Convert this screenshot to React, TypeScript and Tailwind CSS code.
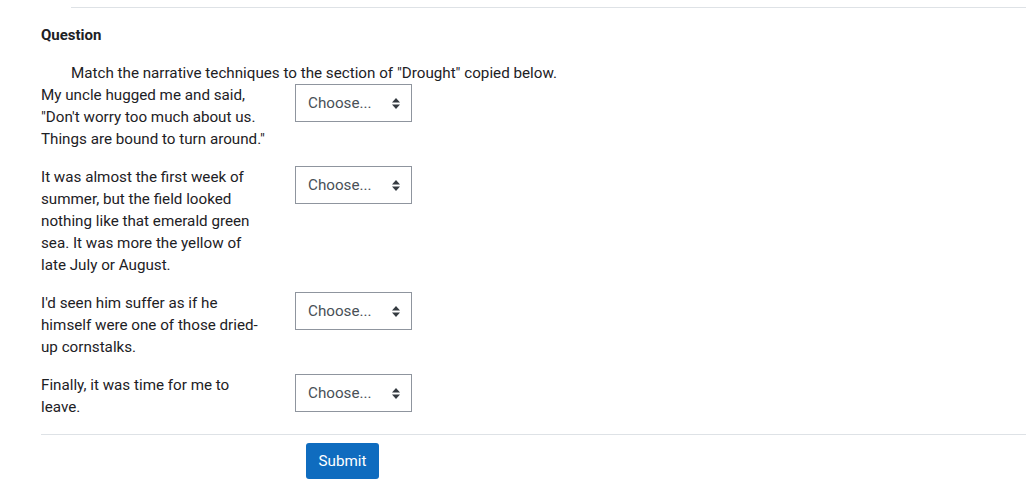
const items = [
  'My uncle hugged me and said, "Don\'t worry too much about us. Things are bound to turn around."',
  'It was almost the first week of summer, but the field looked nothing like that emerald green sea. It was more the yellow of late July or August.',
  "I'd seen him suffer as if he himself were one of those dried-up cornstalks.",
  'Finally, it was time for me to leave.',
]

function ChooseSelect() {
  return (
    <div className="relative h-[38px] w-[117px] border border-[#8f959e] bg-white">
      <span className="absolute left-[12px] top-[7px] leading-[22px] text-[#495057]">Choose...</span>
      <svg className="absolute right-[11px] top-[13px]" width="8" height="11" viewBox="0 0 8 11">
        <path d="M4 0 L8 4.5 H0 Z" fill="#343a40" />
        <path d="M4 11 L8 6.5 H0 Z" fill="#343a40" />
      </svg>
    </div>
  )
}

export default function App() {
  return (
    <div className="min-h-[499px] bg-white text-[15.2px] leading-[22px] text-[#1d2125]" style={{ fontFamily: 'Roboto, "Liberation Sans", sans-serif' }}>
      <div className="ml-[71px] mr-[5px] pt-[7px]">
        <div className="h-px bg-[#dee2e6]" />
      </div>
      <div className="ml-[41px] mr-[5px]">
        <h3 className="mt-[16px] text-[15px] font-bold leading-[22px]">Question</h3>
        <p className="mt-[16px] pl-[30px]">Match the narrative techniques to the section of "Drought" copied below.</p>
        <div className="flex flex-col gap-[16px]">
          {items.map((t, i) => (
            <div key={i} className="flex items-start">
              <div className="w-[225px]">{t}</div>
              <div className="ml-[29px]">
                <ChooseSelect />
              </div>
            </div>
          ))}
        </div>
        <div className="mt-[16px] h-px bg-[#dee2e6]" />
        <div className="mt-[8px] pl-[265px]">
          <button className="h-[36px] w-[73px] rounded-[3px] bg-[#0f6cbf] text-white">Submit</button>
        </div>
      </div>
    </div>
  )
}
